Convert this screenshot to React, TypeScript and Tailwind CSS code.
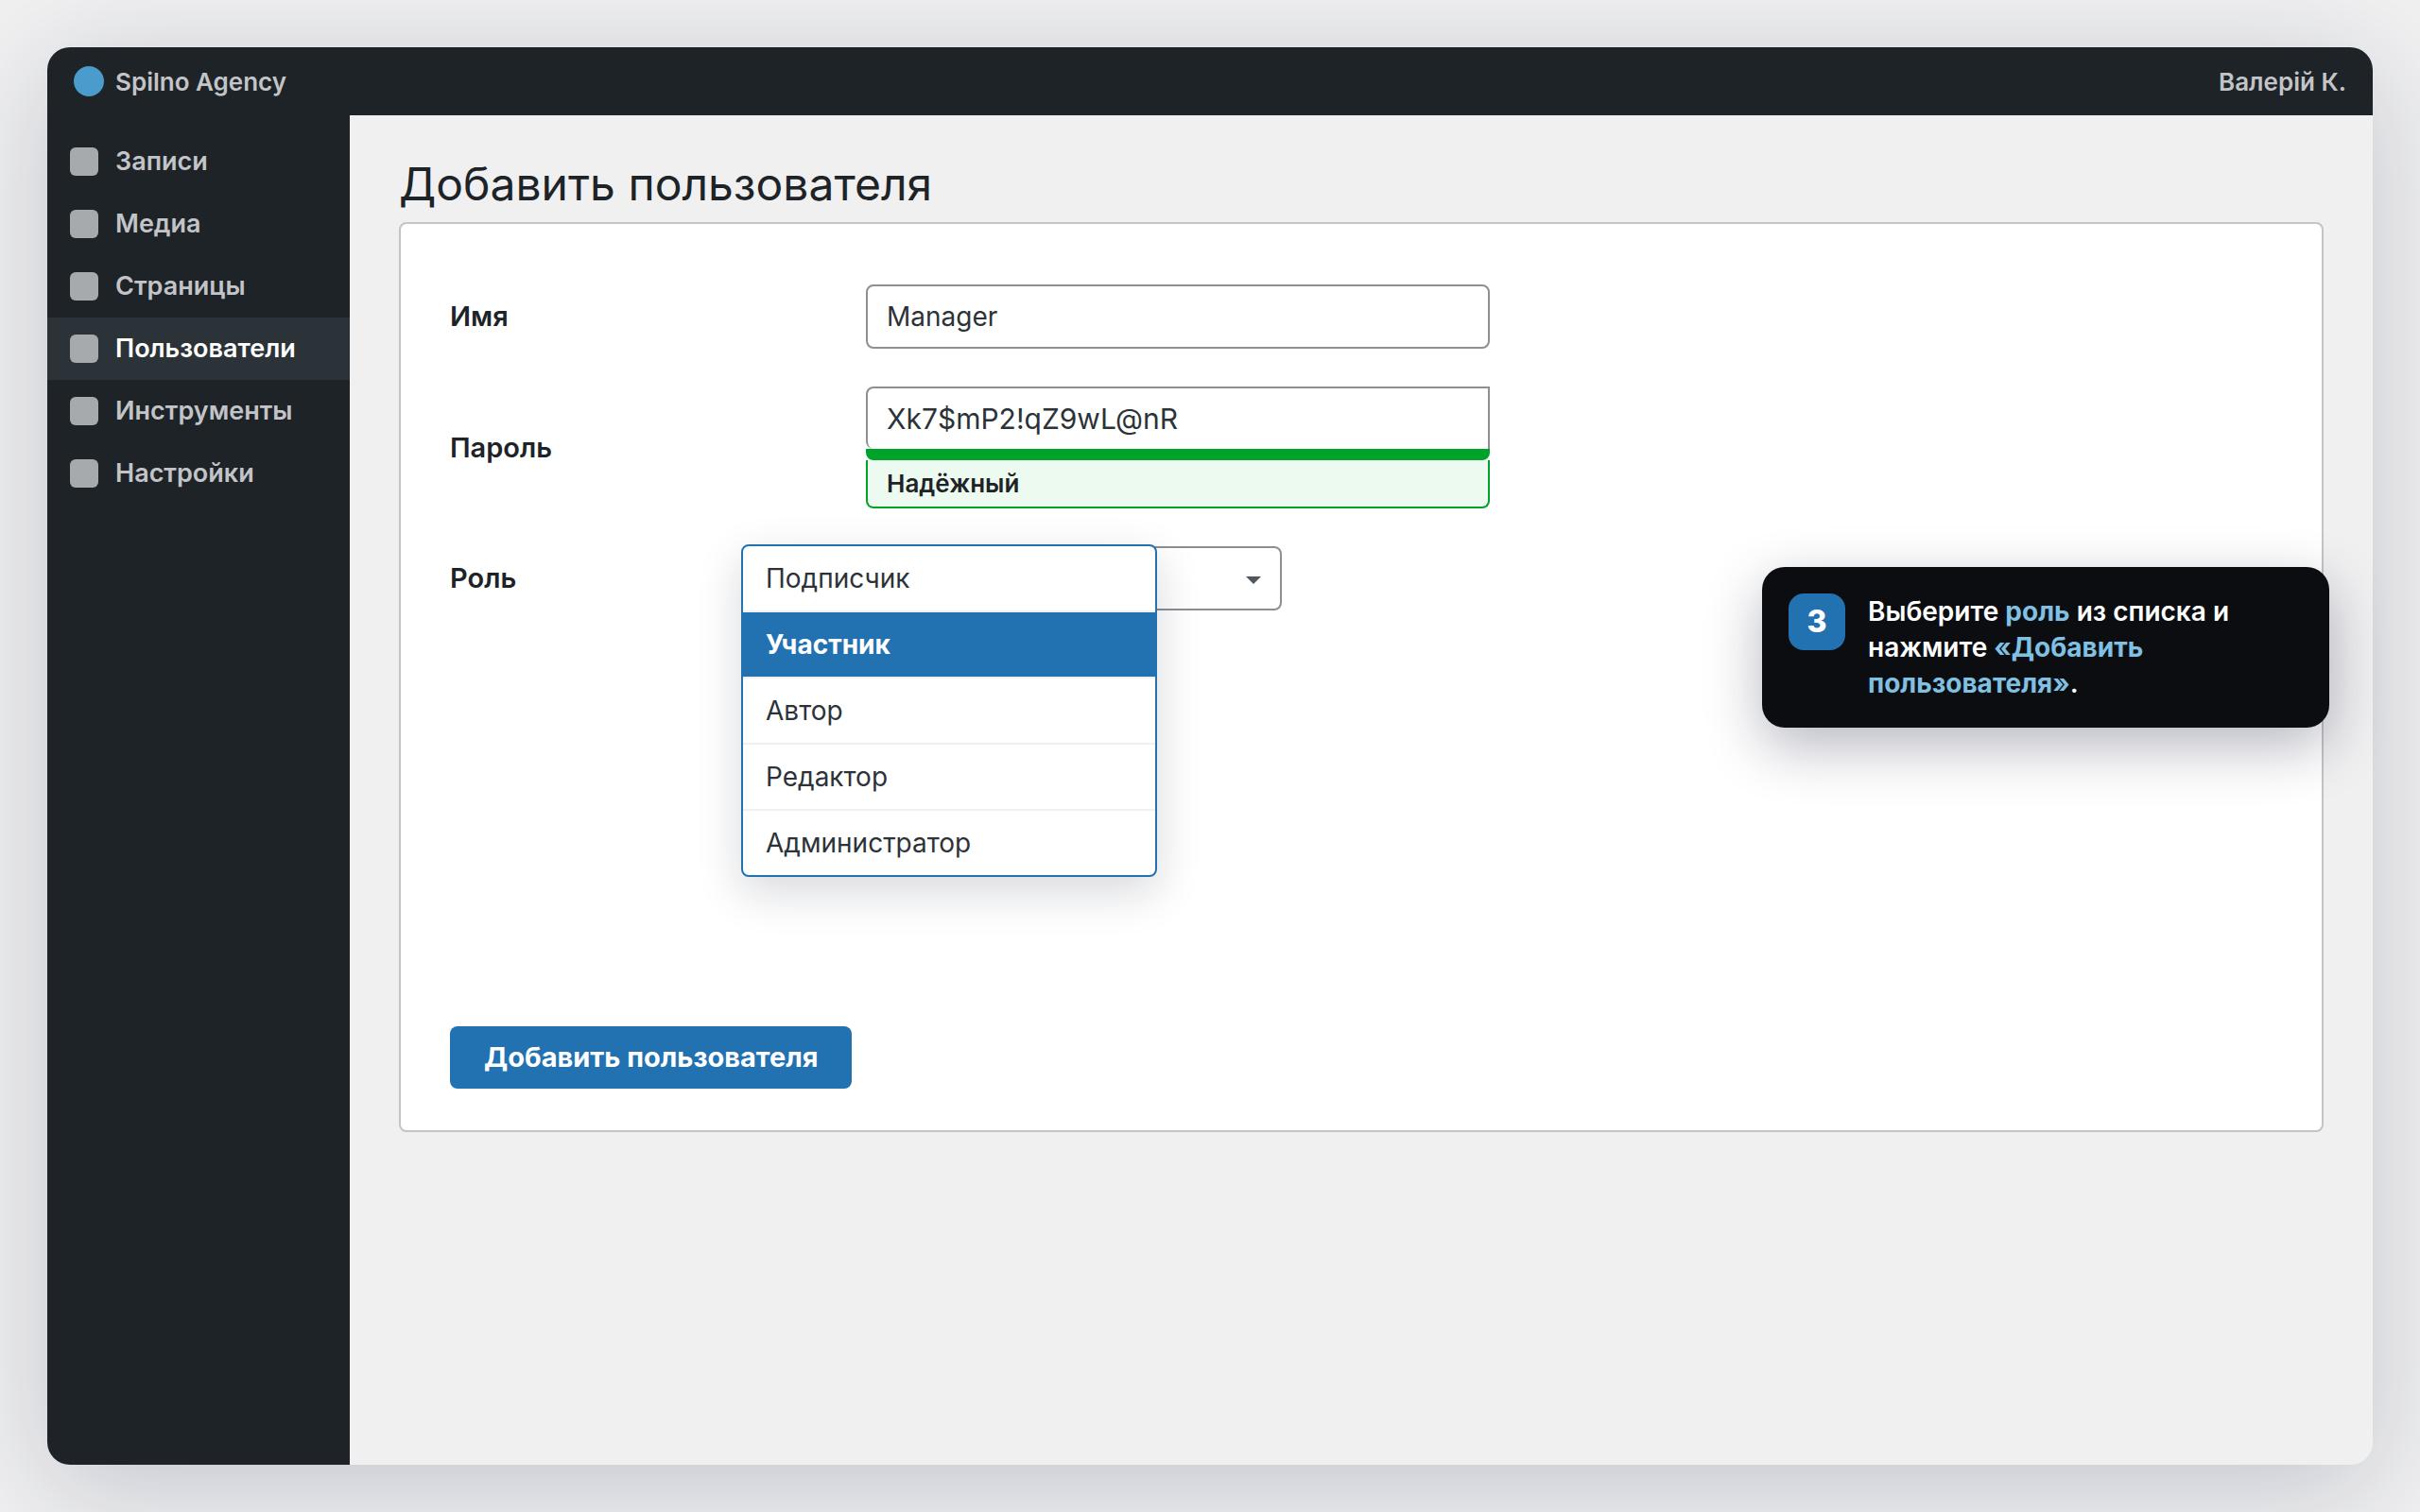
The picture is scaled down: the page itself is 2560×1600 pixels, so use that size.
import { useState } from "react";
import clsx from "clsx";

const MENU_ITEMS = [
  "Записи",
  "Медиа",
  "Страницы",
  "Пользователи",
  "Инструменты",
  "Настройки",
];

const ROLES = ["Подписчик", "Участник", "Автор", "Редактор", "Администратор"];

const Header = () => (
  <header className="flex h-18 shrink-0 items-center justify-between bg-[#1d2327] px-7 text-[26px] font-semibold text-[#c3c4c7]">
    <div className="flex items-center gap-3">
      <span className="size-8 rounded-full bg-[#4b9ccc]" />
      <span>Spilno Agency</span>
    </div>
    <span>Валерій К.</span>
  </header>
);

const Sidebar = ({ active }: { active: string }) => (
  <nav className="w-80 shrink-0 bg-[#1d2327] pt-4">
    {MENU_ITEMS.map((item) => (
      <a
        key={item}
        href="#"
        aria-current={item === active ? "page" : undefined}
        className={clsx(
          "flex h-[66px] items-center gap-[18px] px-6 text-[27px] font-semibold",
          item === active ? "bg-[#2c3338] text-white" : "text-[#c3c4c7]"
        )}
      >
        <span className="size-[30px] rounded-md bg-[#a7aaad]" />
        {item}
      </a>
    ))}
  </nav>
);

interface RoleSelectProps {
  value: string;
  onChange: (role: string) => void;
}

const RoleSelect = ({ value, onChange }: RoleSelectProps) => (
  <div className="relative w-[440px]">
    <select
      id="role"
      value={value}
      onChange={(e) => onChange(e.target.value)}
      className="h-17 w-full appearance-none rounded-lg border-2 border-[#8c8f94] bg-white px-5 text-[28px] text-[#2c3338]"
    >
      {ROLES.map((role) => (
        <option key={role}>{role}</option>
      ))}
    </select>
    <svg
      viewBox="0 0 16 8"
      className="pointer-events-none absolute top-8 right-[22px] h-2 w-4 fill-[#50575e]"
    >
      <path d="M0 0h16L8 8z" />
    </svg>

    {/* Open list, laid over the field */}
    <ul
      role="listbox"
      className="absolute -top-0.5 -left-[132px] w-full divide-y-2 divide-[#f0f0f1] overflow-hidden rounded-lg border-2 border-[#2271b1] bg-white shadow-[0_16px_48px_rgba(15,20,40,0.16)]"
    >
      {ROLES.map((role) => (
        <li key={role} role="option" aria-selected={role === value}>
          <button
            type="button"
            onClick={() => onChange(role)}
            className={clsx(
              "block h-17 w-full px-6 text-left text-[28px]",
              role === value
                ? "bg-[#2271b1] font-bold text-white"
                : "text-[#2c3338]"
            )}
          >
            {role}
          </button>
        </li>
      ))}
    </ul>
  </div>
);

const labelClass = "w-[440px] shrink-0 text-[29px] font-semibold text-[#1d2327]";

const UserForm = () => {
  const [name, setName] = useState("Manager");
  const [password, setPassword] = useState("Xk7$mP2!qZ9wL@nR");
  const [role, setRole] = useState("Участник");

  return (
    <form
      onSubmit={(e) => e.preventDefault()}
      className="rounded-lg border-2 border-[#c3c4c7] bg-white px-[52px] pt-16 pb-11"
    >
      <div className="flex flex-col gap-10">
        <div className="flex items-center">
          <label htmlFor="name" className={labelClass}>
            Имя
          </label>
          <input
            id="name"
            value={name}
            onChange={(e) => setName(e.target.value)}
            className="h-17 w-[660px] rounded-lg border-2 border-[#8c8f94] px-5 text-[28px] text-[#2c3338]"
          />
        </div>

        <div className="flex items-center">
          <label htmlFor="password" className={labelClass}>
            Пароль
          </label>
          <div className="w-[660px]">
            <input
              id="password"
              value={password}
              onChange={(e) => setPassword(e.target.value)}
              className="block h-[66px] w-full rounded-l-lg border-2 border-b-0 border-[#8c8f94] px-5 text-[30px] text-[#2c3338]"
            />
            <div className="h-3 rounded-b-lg bg-[#00a32a]" />
            <div className="flex h-[51px] items-center rounded-b-lg border-2 border-t-0 border-[#00a32a] bg-[#edfaef] px-5 text-[26px] font-semibold text-[#1d2327]">
              Надёжный
            </div>
          </div>
        </div>

        <div className="flex items-center">
          <label htmlFor="role" className={labelClass}>
            Роль
          </label>
          <RoleSelect value={role} onChange={setRole} />
        </div>
      </div>

      <button
        type="submit"
        className="mt-[440px] h-[66px] rounded-lg bg-[#2271b1] px-9 text-[29px] font-bold text-white"
      >
        Добавить пользователя
      </button>
    </form>
  );
};

const StepHint = () => (
  <aside className="absolute top-[550px] right-[46px] flex w-[600px] gap-6 rounded-3xl bg-[#0b0d10] p-7 shadow-[0_20px_60px_rgba(15,20,50,0.3)]">
    <span className="flex size-15 shrink-0 items-center justify-center rounded-2xl bg-[#2271b1] text-[32px] font-extrabold text-white">
      3
    </span>
    <p className="text-[28px] leading-[38px] font-semibold text-white">
      Выберите <strong className="font-bold text-[#7fc0e3]">роль</strong> из
      списка и нажмите{" "}
      <strong className="font-bold text-[#7fc0e3]">
        «Добавить пользователя»
      </strong>
      .
    </p>
  </aside>
);

export default function App() {
  return (
    <div className="flex min-h-screen bg-[#f0f0f1] p-[50px] font-['Inter','Noto_Sans',sans-serif]">
      <div className="relative flex flex-1 flex-col rounded-3xl shadow-[0_24px_120px_rgba(20,30,70,0.2)]">
        <div className="flex flex-1 flex-col overflow-hidden rounded-3xl">
          <Header />
          <div className="flex flex-1">
            <Sidebar active="Пользователи" />
            <main className="flex-1 bg-[#f0f0f1] px-[52px] pt-11">
              <h1 className="mb-3 text-[48px] leading-[57px] text-[#1d2327]">
                Добавить пользователя
              </h1>
              <UserForm />
            </main>
          </div>
        </div>
        <StepHint />
      </div>
    </div>
  );
}
